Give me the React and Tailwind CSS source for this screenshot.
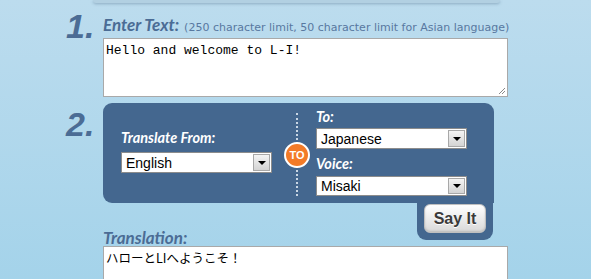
import React from "react";

function Select({ value, width = 151, height = 21 }) {
  return (
    <div
      className="flex items-stretch bg-white border border-[#8c8c8c]"
      style={{ width, height }}
    >
      <div className="flex-1 pl-[4px] flex items-center text-[14px] text-black leading-none" style={{ fontFamily: '"Liberation Sans", Arial, sans-serif' }}>
        {value}
      </div>
      <div className="w-[17px] my-[1px] mr-[1px] bg-gradient-to-b from-[#f4f4f4] to-[#d4d4d4] border border-[#a8a8a8] flex items-center justify-center">
        <div className="w-0 h-0 border-l-[4px] border-r-[4px] border-t-[4px] border-l-transparent border-r-transparent border-t-black" />
      </div>
    </div>
  );
}

const label = { fontFamily: 'Lato, "Liberation Sans", sans-serif' };

export default function App() {
  return (
    <div className="relative w-[591px] h-[279px] overflow-hidden bg-gradient-to-b from-[#bcdcee] to-[#a4d3ea]">
      {/* top card bottom edge */}
      <div className="ml-[93px] w-[407px] h-[3px] rounded-b-[6px] bg-[#b2d0e2] shadow-[0_1px_3px_rgba(80,110,140,0.45)]" />

      {/* Section 1 */}
      <div className="flex pl-[66px] mt-[5px]">
        <div className="w-[37px] text-[34px] font-bold italic leading-none text-[#4b6c95] pt-[1px]" style={{ fontFamily: '"Liberation Sans", Arial, sans-serif' }}>
          1.
        </div>
        <div className="w-[405px]">
          <div className="h-[30px] flex items-end pb-[5px] whitespace-nowrap">
            <span className="text-[17px] font-bold italic text-[#4b6c95] leading-none" style={label}>
              Enter Text:
            </span>
            <span className="ml-[5px] text-[11px] text-[#5878a0] leading-none" style={{ fontFamily: '"DejaVu Sans", Verdana, sans-serif' }}>
              (250 character limit, 50 character limit for Asian language)
            </span>
          </div>
          <div className="relative h-[59px] bg-white border border-[#a9a9a9] px-[2px] pt-[4px] text-[13px] leading-[15px] text-black" style={{ fontFamily: '"Liberation Mono", "Courier New", monospace' }}>
            Hello and welcome to L-I!
            <svg className="absolute right-[1px] bottom-[1px]" width="8" height="8" viewBox="0 0 8 8">
              <path d="M7 1 L1 7 M7 4 L4 7" stroke="#8a8a8a" strokeWidth="1" />
            </svg>
          </div>
        </div>
      </div>

      {/* Section 2 */}
      <div className="flex pl-[66px] mt-[6px]">
        <div className="w-[37px] text-[34px] font-bold italic leading-none text-[#4b6c95] pt-[4px]" style={{ fontFamily: '"Liberation Sans", Arial, sans-serif' }}>
          2.
        </div>
        <div className="w-[391px]">
          <div className="h-[100px] bg-[#44678f] rounded-tr-[9px] rounded-tl-[9px] rounded-bl-[9px] flex">
            <div className="w-[175px] pl-[18px] pt-[28px]">
              <div className="text-[14.5px] font-bold italic text-white leading-none h-[21px]" style={label}>
                Translate From:
              </div>
              <Select value="English" />
            </div>
            <div className="relative w-[38px] flex justify-center">
              <div className="absolute top-[10px] bottom-[7px] left-[18px] border-l-2 border-dotted border-[#c9d6e4]" />
              <div className="absolute left-[6px] top-[39px] w-[26px] h-[26px] rounded-full bg-[#f37b28] border-2 border-white flex items-center justify-center text-white text-[11px] font-bold leading-none" style={{ fontFamily: '"Liberation Sans", Arial, sans-serif' }}>
                TO
              </div>
            </div>
            <div className="pt-[7px]">
              <div className="text-[14.5px] font-bold italic text-white leading-none h-[18px]" style={label}>
                To:
              </div>
              <Select value="Japanese" />
              <div className="text-[14.5px] font-bold italic text-white leading-none h-[27px] pt-[8px]" style={label}>
                Voice:
              </div>
              <Select value="Misaki" height={20} />
            </div>
          </div>
          <div className="flex justify-end pr-[1px]">
            <div className="w-[76px] h-[37px] bg-[#44678f] rounded-b-[9px] flex items-start justify-center pt-[1px]">
              <div
                className="w-[62px] h-[29px] rounded-[6px] border border-[#bfbfbf] bg-gradient-to-b from-white to-[#d9d9d9] flex items-center justify-center text-[16px] font-bold text-[#3a3a3a] [text-shadow:0_1px_0_#fff] shadow-[inset_0_-1px_2px_rgba(0,0,0,0.15)]"
                style={{ fontFamily: '"Liberation Sans", Arial, sans-serif' }}
              >
                Say It
              </div>
            </div>
          </div>
        </div>
      </div>

      {/* Translation */}
      <div className="pl-[103px] -mt-[11px]">
        <div className="h-[17px] text-[17px] font-bold italic text-[#4b6c95] leading-none" style={label}>
          Translation:
        </div>
        <div className="w-[405px] h-[60px] bg-white border border-[#a9a9a9] px-[2px] pt-[3px] text-[12.5px] leading-[16px] text-black" style={{ fontFamily: '"Noto Sans CJK JP", sans-serif' }}>
          ハローとLIへようこそ！
        </div>
      </div>
    </div>
  );
}
